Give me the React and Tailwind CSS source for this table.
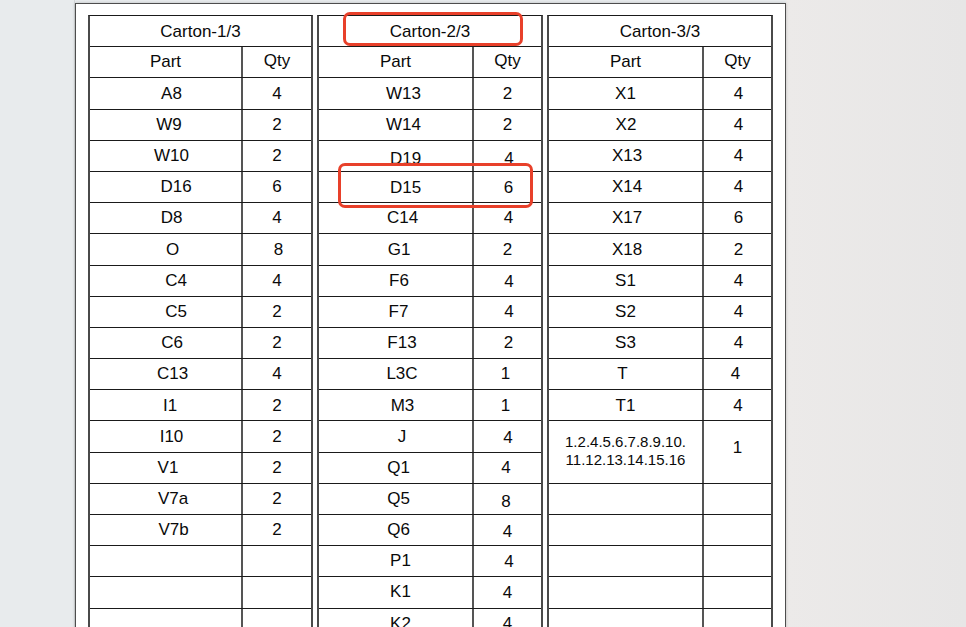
import React from 'react'

// Packing list: three cartons side by side on a white sheet
const cartons = [
  {
    title: 'Carton-1/3',
    width: 'w-[225px]',
    partW: 'w-[153px]',
    rows: [
      { p: 'A8', q: '4', pc: 'pl-[12px]' },
      { p: 'W9', q: '2', pc: 'pl-[7px]' },
      { p: 'W10', q: '2', pc: 'pl-[12px]' },
      { p: 'D16', q: '6', pc: 'pl-[21px]' },
      { p: 'D8', q: '4', pc: 'pl-[12px]' },
      { p: 'O', q: '8', pc: 'pl-[14px]', qc: 'pl-[3px]' },
      { p: 'C4', q: '4', pc: 'pl-[21px]' },
      { p: 'C5', q: '2', pc: 'pl-[21px]' },
      { p: 'C6', q: '2', pc: 'pl-[13px]' },
      { p: 'C13', q: '4', pc: 'pl-[14px]' },
      { p: 'I1', q: '2', pc: 'pl-[9px]' },
      { p: 'I10', q: '2', pc: 'pl-[12px]' },
      { p: 'V1', q: '2', pc: 'pl-[5px]' },
      { p: 'V7a', q: '2', pc: 'pl-[15px]' },
      { p: 'V7b', q: '2', pc: 'pl-[16px]' },
      {}, {}, {},
    ],
  },
  {
    title: 'Carton-2/3',
    width: 'w-[226px]',
    partW: 'w-[155px]',
    rows: [
      { p: 'W13', q: '2', pc: 'pl-[16px]' },
      { p: 'W14', q: '2', pc: 'pl-[16px]' },
      { p: 'D19', q: '4', pc: 'pl-[20px] pt-[6px]', qc: 'pl-[3px] pt-[6px]' },
      { p: 'D15', q: '6', pc: 'pl-[20px] pt-[1px]', qc: 'pl-[2px] pt-[1px]' },
      { p: 'C14', q: '4', pc: 'pl-[14px]', qc: 'pl-[2px]' },
      { p: 'G1', q: '2', pc: 'pl-[7px]' },
      { p: 'F6', q: '4', pc: 'pl-[7px]', qc: 'pl-[3px] pt-[2px]' },
      { p: 'F7', q: '4', pc: 'pl-[6px]', qc: 'pl-[3px]' },
      { p: 'F13', q: '2', pc: 'pl-[13px]', qc: 'pl-[2px]' },
      { p: 'L3C', q: '1', pc: 'pl-[13px]', qc: 'pr-[4px]' },
      { p: 'M3', q: '1', pc: 'pl-[14px]', qc: 'pr-[4px]' },
      { p: 'J', q: '4', pc: 'pl-[13px]', qc: 'pl-[1px] pt-[2px]' },
      { p: 'Q1', q: '4', pc: 'pl-[6px]', qc: 'pr-[3px]' },
      { p: 'Q5', q: '8', pc: 'pl-[6px]', qc: 'pr-[3px] pt-[6px]' },
      { p: 'Q6', q: '4', pc: 'pl-[6px]', qc: 'pt-[4px]' },
      { p: 'P1', q: '4', pc: 'pl-[10px] pb-[2px]', qc: 'pl-[3px]' },
      { p: 'K1', q: '4', pc: 'pl-[10px] pb-[2px]' },
      { p: 'K2', q: '4', pc: 'pl-[10px]' },
    ],
  },
  {
    title: 'Carton-3/3',
    width: 'w-[226px]',
    partW: 'w-[155px]',
    rows: [
      { p: 'X1', q: '4', qc: 'pl-[2px]' },
      { p: 'X2', q: '4', pc: 'pl-[1px]', qc: 'pl-[2px]' },
      { p: 'X13', q: '4', pc: 'pl-[3px]', qc: 'pl-[2px]' },
      { p: 'X14', q: '4', pc: 'pl-[3px]', qc: 'pl-[2px]' },
      { p: 'X17', q: '6', pc: 'pl-[3px]', qc: 'pl-[2px]' },
      { p: 'X18', q: '2', pc: 'pl-[3px]', qc: 'pl-[2px]' },
      { p: 'S1', q: '4', qc: 'pl-[2px]' },
      { p: 'S2', q: '4', qc: 'pl-[2px]' },
      { p: 'S3', q: '4', qc: 'pl-[2px]' },
      { p: 'T', q: '4', pc: 'pr-[6px]', qc: 'pr-[4px]' },
      { p: 'T1', q: '4', qc: 'pl-[1px]' },
      { big: true, p: ['1.2.4.5.6.7.8.9.10.', '11.12.13.14.15.16'], q: '1' },
      {}, {}, {}, {}, {},
    ],
  },
]

function Row({ row, partW }) {
  if (row.big) {
    return (
      <div className="flex h-[62.4px] border-b border-[#1a1a1a]">
        <div className={`${partW} shrink-0 border-r-2 border-[#555] flex flex-col items-center justify-center pb-[3px] text-[15px] leading-[17.5px]`}>
          {row.p.map((l) => (
            <span key={l}>{l}</span>
          ))}
        </div>
        <div className="flex-1 flex items-center justify-center pb-[8px]">{row.q}</div>
      </div>
    )
  }
  return (
    <div className="flex h-[31.2px] border-b border-[#1a1a1a]">
      <div className={`${partW} shrink-0 border-r-2 border-[#555] flex items-center justify-center ${row.pc || ''}`}>
        {row.p}
      </div>
      <div className={`flex-1 flex items-center justify-center ${row.qc || ''}`}>{row.q}</div>
    </div>
  )
}

function Carton({ carton }) {
  return (
    <div className={`${carton.width} shrink-0 border-t border-x-2 border-t-[#1a1a1a] border-x-[#4a4a4a]`}>
      <div className="h-[31.2px] border-b border-[#1a1a1a] flex items-center justify-center pt-[1px]">
        {carton.title}
      </div>
      <div className="flex h-[31.2px] border-b border-[#1a1a1a]">
        <div className={`${carton.partW} shrink-0 border-r-2 border-[#555] flex items-center justify-center pb-[1px]`}>
          Part
        </div>
        <div className="flex-1 flex items-center justify-center pb-[3px]">Qty</div>
      </div>
      {carton.rows.map((row, i) => (
        <Row key={i} row={row} partW={carton.partW} />
      ))}
    </div>
  )
}

export default function App() {
  return (
    <div className="h-[627px] w-[966px] overflow-hidden flex bg-[#e8ebed] font-['Liberation_Sans',Arial,sans-serif] text-[17px] text-[#0a0a0a]">
      <div className="w-[75px] shrink-0 border-r border-[#d3d6d8]" />
      <div className="w-[711px] shrink-0 pt-[3px]">
        <div className="relative h-[640px] bg-white border-t border-x border-[#4d4d4d] pl-[12px] pt-[11px] shadow-[0_0_3px_rgba(0,0,0,0.2)]">
          <div className="flex gap-[4px]">
            {cartons.map((c) => (
              <Carton key={c.title} carton={c} />
            ))}
          </div>
          {/* highlight boxes */}
          <div className="absolute left-[267px] top-[8px] w-[180px] h-[34px] border-[3px] border-[#e8402a] rounded-[7px]" />
          <div className="absolute left-[262px] top-[159px] w-[195px] h-[45px] border-[3px] border-[#e8402a] rounded-[7px]" />
        </div>
      </div>
      <div className="flex-1 bg-linear-to-r from-[#eceae9] to-[#e7e6e6]" />
    </div>
  )
}
